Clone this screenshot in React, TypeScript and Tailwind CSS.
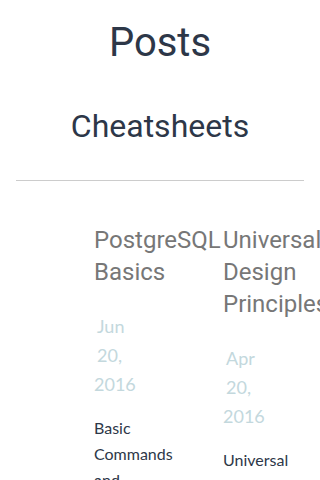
import React from "react";

type Post = {
  title: string;
  date: string[];
  excerpt: string;
};

const posts: Post[] = [
  {
    title: "PostgreSQL Basics",
    date: ["Jun", "20,", "2016"],
    excerpt: "Basic Commands and Examples",
  },
  {
    title: "Universal Design Principles",
    date: ["Apr", "20,", "2016"],
    excerpt: "Universal design principles for the web",
  },
];

const heading = { fontFamily: "Roboto, 'Liberation Sans', sans-serif" };
const body = { fontFamily: "Lato, 'Open Sans', sans-serif" };

function PostCard({ post }: { post: Post }) {
  return (
    <div className="w-[129px] shrink-0">
      <h3 className="text-[24px] leading-[32px] text-[#777] pr-1" style={heading}>
        {post.title}
      </h3>
      <div className="mt-[24px] text-[18px] leading-[29px] text-[#c3d8dd]" style={body}>
        {post.date.map((d, i) => (
          <div key={d} className={i < 2 ? "pl-[3px]" : ""}>
            {d}
          </div>
        ))}
      </div>
      <p className="mt-[16px] w-[88px] text-[16px] leading-[26px] text-[#2d3748]" style={body}>
        {post.excerpt}
      </p>
    </div>
  );
}

export default function App() {
  return (
    <div className="w-[320px] h-[480px] overflow-hidden bg-white">
      <h1 className="mt-[19px] text-center text-[40px] leading-[48px] text-[#2d3748]" style={heading}>
        Posts
      </h1>
      <h2 className="mt-[39px] text-center text-[32px] leading-[40px] text-[#2d3748]" style={heading}>
        Cheatsheets
      </h2>
      <hr className="mt-[34px] mx-4 border-0 border-t border-[#ccc]" />
      <div className="mt-[43px] flex pl-[94px]">
        {posts.map((p) => (
          <PostCard key={p.title} post={p} />
        ))}
      </div>
    </div>
  );
}
